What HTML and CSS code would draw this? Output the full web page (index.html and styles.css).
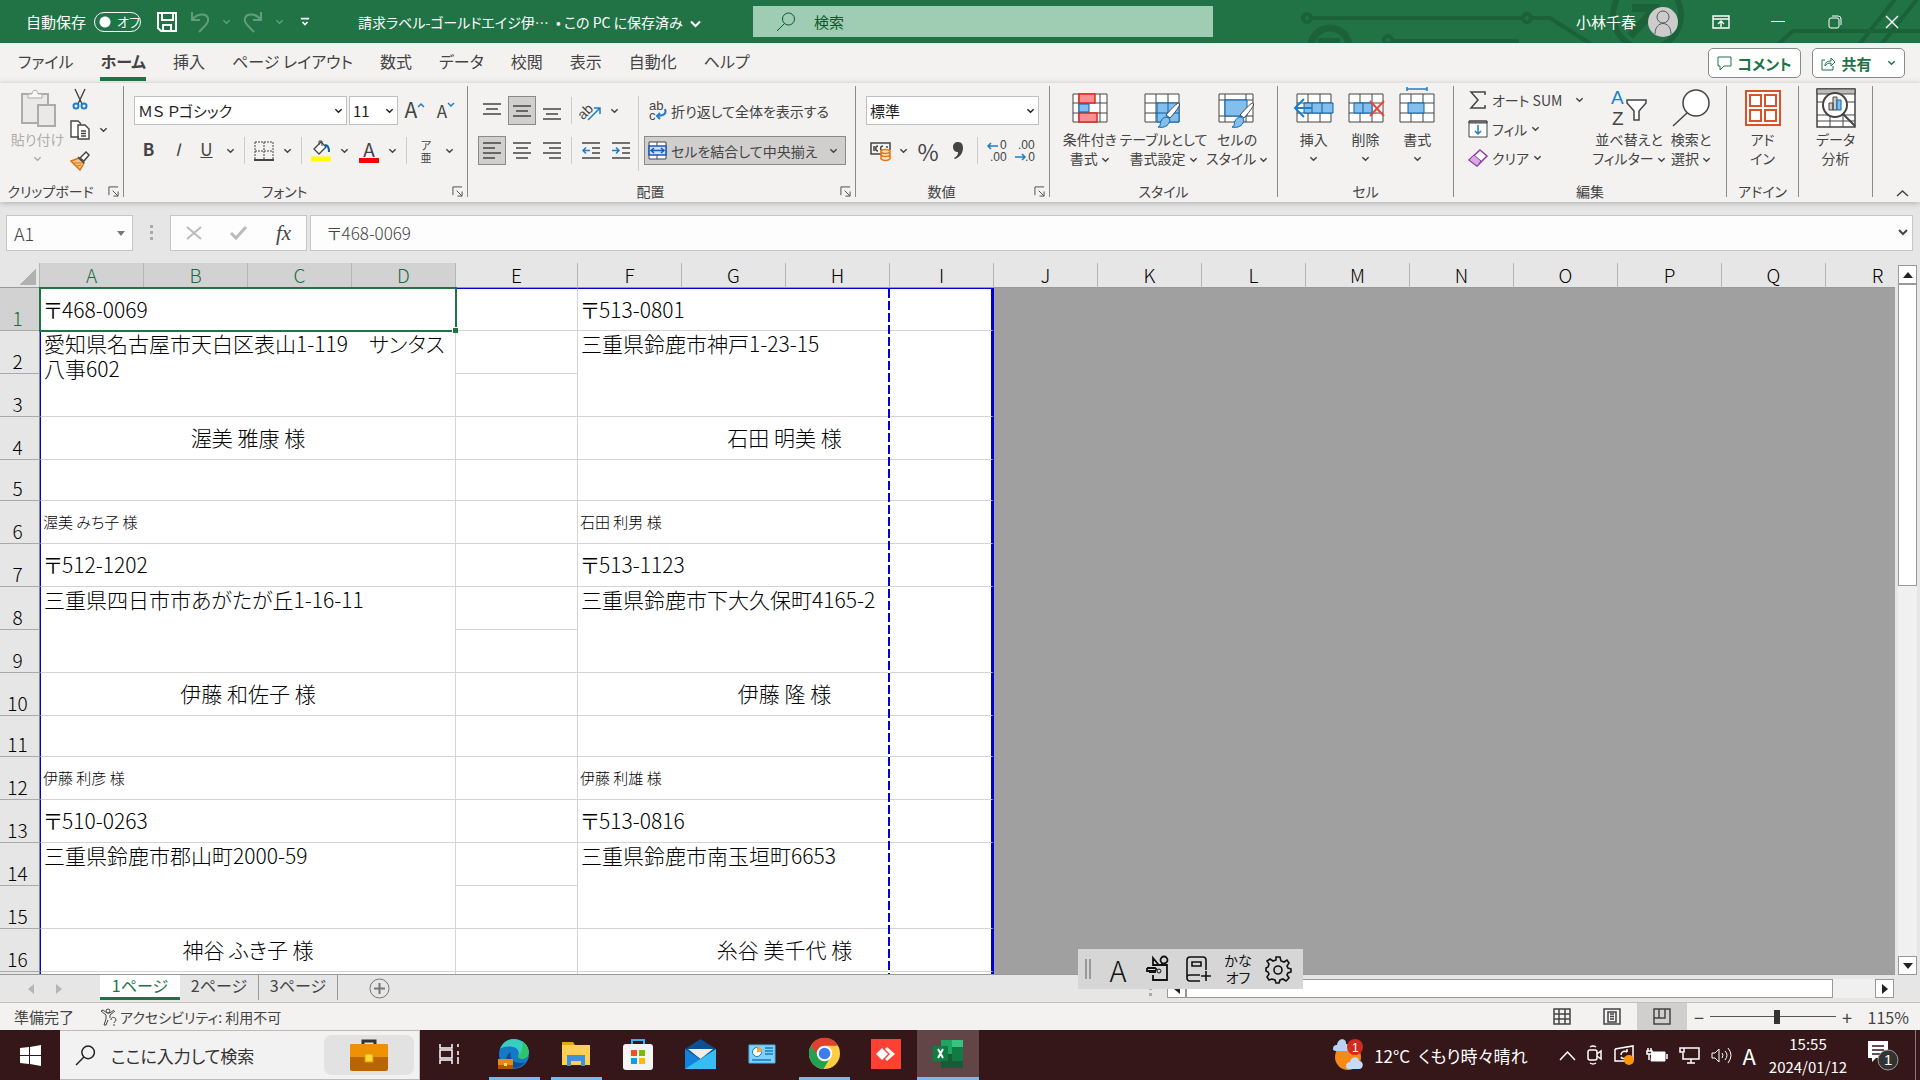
FILE: index.html
```html
<!DOCTYPE html>
<html lang="ja">
<head>
    <meta charset="UTF-8">
    <meta name="viewport" content="width=device-width, initial-scale=1.0">
    <title>請求ラベル - Excel</title>
    <link rel="stylesheet" href="styles.css">
</head>
<body>

    <!-- Shared icons -->
    <svg class="sprite" aria-hidden="true">
        <symbol id="chev" viewBox="0 0 10 6"><path stroke-width="1.600" d="M1.500 1 5 4.500 8.500 1"/></symbol>
        <symbol id="launch" viewBox="0 0 12 12"><path d="M1 10V1h10M5 5l5.500 5.500M11 6v5H6"/></symbol>
        <symbol id="lens" viewBox="0 0 20 20"><circle cx="12.500" cy="7" r="6"/><path d="M8.500 11.500 1 19"/></symbol>
        <symbol id="grid" viewBox="0 0 36 30"><path fill="#fff" d="M1 1h34v28H1z"/><path d="M1 10h34M1 20h34M12 1v28M24 1v28"/></symbol>
        <symbol id="paint" viewBox="0 0 24 28"><path fill="#fff" stroke="#444" d="M22 1c2 1-1 6-9 15l-4-3C16 5 20 1 22 1z"/><path fill="#83beec" stroke="#0063b1" d="M9 15c3 0 5 3 3 6-2 4-7 5-11 4 3-1 2-4 3-6s3-4 5-4z"/></symbol>
    </svg>

    <header class="titlebar">
        <svg class="circuit" viewBox="0 0 640 43" aria-hidden="true">
            <g fill="none" stroke="#1b6139" stroke-width="4">
                <circle cx="27" cy="18" r="4"/><path d="M32 18h211"/><circle cx="247" cy="18" r="4"/><path d="M252 18h18l44 28"/>
                <circle cx="50" cy="47" r="19" stroke-width="7"/><path d="M38 42h22" stroke-width="8"/>
                <circle cx="108" cy="40" r="4"/><path d="M113 41h126"/>
                <circle cx="367" cy="15" r="34" stroke-width="6"/><path d="M352 8h24v22M350 36l25-27" stroke-width="8"/>
                <path d="M496 46l17-15h127M578 46l38-48M600 46l38-48"/>
            </g>
        </svg>
        <label class="autosave">自動保存 <input type="checkbox"><span class="switch">オフ</span></label>
        <div class="quick">
            <button aria-label="保存"><svg width="22" height="22" viewBox="0 0 22 22"><path d="M2 2h18v18H5l-3-3zM6 2v7h11V2M7 20v-6h8v6" stroke-width="2"/></svg></button>
            <button class="dim" aria-label="元に戻す"><svg width="20" height="22" viewBox="0 0 20 22"><path d="M2 1v8h8M2 9c5-7 14-7 16-2 1 4-1 6-9 14" stroke-width="2"/></svg></button>
            <button class="dim" aria-label="元に戻す 一覧"><svg width="9" height="6"><use href="#chev"/></svg></button>
            <button class="dim" aria-label="やり直し"><svg width="20" height="22" viewBox="0 0 20 22"><path d="M18 1v8h-8M18 9C13 2 4 2 2 7c-1 4 1 6 9 14" stroke-width="2"/></svg></button>
            <button class="dim" aria-label="やり直し 一覧"><svg width="9" height="6"><use href="#chev"/></svg></button>
            <button aria-label="カスタマイズ"><svg width="10" height="10" viewBox="0 0 12 12"><path d="M1 2h10M3 6l3 3 3-3" stroke-width="2"/></svg></button>
        </div>
        <div class="doc">請求ラベル-ゴールドエイジ伊… <span>• この PC に保存済み</span> <svg width="13" height="8"><use href="#chev"/></svg></div>
        <div class="search"><svg width="20" height="22"><use href="#lens"/></svg><input type="search" placeholder="検索" aria-label="検索"></div>
        <div class="account">小林千春 <span class="avatar"><svg width="20" height="26" viewBox="0 0 20 26"><circle cx="10" cy="8" r="6"/><path d="M2 25c0-14 16-14 16 0"/></svg></span></div>
        <div class="winbtns">
            <button aria-label="リボンの表示オプション"><svg width="18" height="14" viewBox="0 0 18 14"><path d="M1 1h16v12H1zM1 4h16M9 12V6M6 9l3-3 3 3" stroke-width="1.400"/></svg></button>
            <button aria-label="最小化"><svg width="14" height="14" viewBox="0 0 14 14"><path d="M0 6.500h14"/></svg></button>
            <button aria-label="元のサイズ"><svg width="14" height="14" viewBox="0 0 14 14"><rect x="1" y="3" width="10" height="10" rx="2"/><path d="M4 1h6q3 0 3 3v6"/></svg></button>
            <button aria-label="閉じる"><svg width="14" height="14" viewBox="0 0 14 14"><path d="M1 1l12 12M13 1 1 13" stroke-width="1.400"/></svg></button>
        </div>
    </header>

    <nav class="tabs">
        <a href="#">ファイル</a>
        <a href="#" class="active">ホーム</a>
        <a href="#">挿入</a>
        <a href="#">ページ レイアウト</a>
        <a href="#">数式</a>
        <a href="#">データ</a>
        <a href="#">校閲</a>
        <a href="#">表示</a>
        <a href="#">自動化</a>
        <a href="#">ヘルプ</a>
        <div class="tabs-right">
            <button class="pill"><svg width="15" height="15" viewBox="0 0 15 15"><path d="M1 1h13v9H7l-4 4v-4H1z"/></svg>コメント</button>
            <button class="pill"><svg width="15" height="15" viewBox="0 0 15 15"><path d="M4 4H1v10h11v-4M4 10c0-4 3-5 6-5V2l4 4-4 4V7c-3 0-5 1-6 3z"/></svg>共有<svg class="gap-left" width="9" height="6"><use href="#chev"/></svg></button>
        </div>
    </nav>

    <section class="ribbon">
        <div class="group clip">
            <div class="body">
                <button class="big dim"><span class="pic"><svg width="36" height="38" viewBox="0 0 36 38"><path fill="#ddd" d="M2 5h26v11H18v18H2z" stroke-width="2"/><path fill="#fff" d="M8 9V5h4c0-5 6-5 6 0h4v4z"/><path fill="#ddd" stroke-width="2" d="M18 16h17v21H18z"/></svg></span>貼り付け<svg width="9" height="6"><use href="#chev"/></svg></button>
                <div class="stack">
                    <button class="mini" aria-label="切り取り"><svg width="16" height="22" viewBox="0 0 16 22"><path d="M3 1l7 15M13 1 6 16" stroke-width="1.400"/><g stroke="#1e7fc8" stroke-width="2"><circle cx="4" cy="18" r="2.500"/><circle cx="12" cy="18" r="2.500"/></g></svg></button>
                    <button class="mini wide" aria-label="コピー"><svg width="20" height="20" viewBox="0 0 20 20"><path fill="#fff" stroke-width="1.400" d="M9 17H1V1h7l3 3M8 5h7l4 4v10H8zM11 11h5M11 13.500h5M11 16h5"/></svg><svg width="9" height="6"><use href="#chev"/></svg></button>
                    <button class="mini" aria-label="書式のコピー"><svg width="20" height="20" viewBox="0 0 20 20"><path fill="#fff" stroke-width="1.500" d="M10 7l6-6 3 3-5 6z"/><path fill="#f8c48c" stroke="#d9730d" stroke-width="1.500" d="M1 10l8-3 5 5-4 7z"/><path d="M8 6l6 6" stroke-width="1.500"/><path stroke="#d9730d" d="M4 12l8 0M7 15l4-1"/></svg></button>
                </div>
            </div>
            <div class="caption more">クリップボード<button aria-label="クリップボードの設定"><svg width="11" height="11"><use href="#launch"/></svg></button></div>
        </div>

        <div class="group font">
            <div class="body rows">
                <div class="row">
                    <span class="combo name"><select aria-label="フォント"><option>ＭＳ Ｐゴシック</option></select><svg width="9" height="6"><use href="#chev"/></svg></span>
                    <span class="combo size"><select aria-label="フォント サイズ"><option>11</option></select><svg width="9" height="6"><use href="#chev"/></svg></span>
                    <button class="tool grow" aria-label="フォント サイズの拡大">A<svg width="8" height="6" viewBox="0 0 8 6"><path stroke="#1e7fc8" d="M1 5l3-3 3 3" stroke-width="1.500"/></svg></button>
                    <button class="tool shrink" aria-label="フォント サイズの縮小">A<svg width="8" height="6" viewBox="0 0 8 6"><path stroke="#1e7fc8" d="M1 1l3 3 3-3" stroke-width="1.500"/></svg></button>
                </div>
                <div class="row">
                    <button class="tool letter"><b>B</b></button>
                    <button class="tool letter"><i>I</i></button>
                    <button class="tool letter"><u>U</u></button>
                    <button class="drop" aria-label="下線"><svg width="9" height="6"><use href="#chev"/></svg></button>
                    <i class="sep"></i>
                    <button class="tool" aria-label="罫線"><svg width="20" height="20" viewBox="0 0 20 20"><path stroke-dasharray="2 1" d="M1 1h18v17M1 1v17M10 1v17M1 10h18"/><path d="M0 19h20" stroke-width="2"/></svg></button>
                    <button class="drop" aria-label="罫線の種類"><svg width="9" height="6"><use href="#chev"/></svg></button>
                    <i class="sep"></i>
                    <button class="tool" aria-label="塗りつぶしの色"><svg width="20" height="22" viewBox="0 0 20 22"><path fill="#fff" stroke-width="1.300" d="M3 9l7-7 5 5-7 7z"/><path d="M8 5V1h3v5"/><path stroke="#0063b1" stroke-width="2" d="M14 5c3 0 4 2 4 7"/><path stroke="#ff0" stroke-width="5" d="M0 19h20"/></svg></button>
                    <button class="drop" aria-label="塗りつぶしの色 一覧"><svg width="9" height="6"><use href="#chev"/></svg></button>
                    <button class="tool fontcolor" aria-label="フォントの色">A</button>
                    <button class="drop" aria-label="フォントの色 一覧"><svg width="9" height="6"><use href="#chev"/></svg></button>
                    <i class="sep"></i>
                    <button class="tool ruby" aria-label="ふりがな">ア<br>亜</button>
                    <button class="drop" aria-label="ふりがな 一覧"><svg width="9" height="6"><use href="#chev"/></svg></button>
                </div>
            </div>
            <div class="caption more">フォント<button aria-label="フォントの設定"><svg width="11" height="11"><use href="#launch"/></svg></button></div>
        </div>

        <div class="group align">
            <div class="body">
                <div class="rows">
                    <div class="row spaced">
                        <button class="tool" aria-label="上揃え"><svg width="18" height="20" viewBox="0 0 18 20"><path d="M0 3h18M3 8h12M0 13h18" stroke-width="1.500"/></svg></button>
                        <button class="tool on" aria-label="上下中央揃え"><svg width="18" height="20" viewBox="0 0 18 20"><path d="M0 5h18M3 10h12M0 15h18" stroke-width="1.500"/></svg></button>
                        <button class="tool" aria-label="下揃え"><svg width="18" height="20" viewBox="0 0 18 20"><path d="M0 8h18M3 13h12M0 18h18" stroke-width="1.500"/></svg></button>
                        <i class="sep"></i>
                        <button class="tool" aria-label="方向"><svg width="22" height="22" viewBox="0 0 22 22"><text x="-3" y="14" transform="rotate(-45 8 10)" font-size="14">ab</text><path stroke="#1e7fc8" stroke-width="1.500" d="M8 20 20 8M14 8h6v6"/></svg></button>
                        <button class="drop" aria-label="方向 一覧"><svg width="9" height="6"><use href="#chev"/></svg></button>
                    </div>
                    <div class="row spaced">
                        <button class="tool on" aria-label="左揃え"><svg width="18" height="20" viewBox="0 0 18 20"><path d="M0 2h18M0 7h12M0 12h18M0 17h12" stroke-width="1.500"/></svg></button>
                        <button class="tool" aria-label="中央揃え"><svg width="18" height="20" viewBox="0 0 18 20"><path d="M0 2h18M3 7h12M0 12h18M3 17h12" stroke-width="1.500"/></svg></button>
                        <button class="tool" aria-label="右揃え"><svg width="18" height="20" viewBox="0 0 18 20"><path d="M0 2h18M6 7h12M0 12h18M6 17h12" stroke-width="1.500"/></svg></button>
                        <i class="sep"></i>
                        <button class="tool" aria-label="インデントを減らす"><svg width="18" height="20" viewBox="0 0 18 20"><path d="M0 2h18M10 7h8M10 12h8M0 17h18" stroke-width="1.500"/><path stroke="#1e7fc8" stroke-width="1.500" d="M8 9.500H1M4 6.500l-3 3 3 3"/></svg></button>
                        <button class="tool" aria-label="インデントを増やす"><svg width="18" height="20" viewBox="0 0 18 20"><path d="M0 2h18M10 7h8M10 12h8M0 17h18" stroke-width="1.500"/><path stroke="#1e7fc8" stroke-width="1.500" d="M0 9.500h7M4 6.500l3 3-3 3"/></svg></button>
                    </div>
                </div>
                <i class="sep tall"></i>
                <div class="rows">
                    <button class="textbtn"><svg width="18" height="20" viewBox="0 0 18 20"><text x="0" y="9" font-size="13">ab</text><text x="0" y="19" font-size="13">c</text><path stroke="#1e7fc8" stroke-width="2" d="M16 8c2 5-2 7-8 7M11 12l-3 3 3 3"/></svg>折り返して全体を表示する</button>
                    <button class="textbtn on"><svg width="19" height="21" viewBox="0 0 19 19"><path fill="#fff" d="M1 1h17v17H1zM9 1v17"/><path fill="#cde3f5" stroke="#185abd" stroke-width="1.500" d="M1 5h17v9H1z"/><path stroke="#185abd" stroke-width="1.500" d="M3 9.500h13M6 7 3 9.500 6 12M13 7l3 2.500-3 2.500"/></svg>セルを結合して中央揃え<svg class="end" width="9" height="6"><use href="#chev"/></svg></button>
                </div>
            </div>
            <div class="caption more">配置<button aria-label="配置の設定"><svg width="11" height="11"><use href="#launch"/></svg></button></div>
        </div>

        <div class="group number">
            <div class="body rows">
                <span class="combo"><select aria-label="数値の書式"><option>標準</option></select><svg width="9" height="6"><use href="#chev"/></svg></span>
                <div class="row">
                    <button class="tool" aria-label="通貨"><svg width="21" height="20" viewBox="0 0 21 20"><path d="M20 9V2H1v11h10M8 5c-3 0-3 5 0 5M13 5c-3 0-3 4-1 5M4 5v5M17 5v2" stroke-width="1.500"/><path fill="#fde3c8" stroke="#e8740c" stroke-width="1.500" d="M11 10v8c2 2 7 2 9 0v-8c-2-2-7-2-9 0zM11 11c2 2 7 2 9 0M11 14c2 2 7 2 9 0"/></svg></button>
                    <button class="drop" aria-label="通貨 一覧"><svg width="9" height="6"><use href="#chev"/></svg></button>
                    <button class="tool percent">%</button>
                    <button class="tool" aria-label="桁区切り"><svg width="12" height="18" viewBox="0 0 12 18"><path fill="#444" stroke="none" d="M6 0c4 0 5 3 5 6 0 5-3 9-8 11l-1-1c3-2 4-3 4-6-3 0-5-2-5-5s2-5 5-5z"/></svg></button>
                    <i class="sep"></i>
                    <button class="tool" aria-label="小数点以下の表示桁数を増やす"><svg width="20" height="22" viewBox="0 0 20 22"><text x="13" y="9" font-size="12">0</text><text x="3" y="21" font-size="12">.00</text><path stroke="#1e7fc8" stroke-width="1.500" d="M11 6H1M4 3 1 6l3 3"/></svg></button>
                    <button class="tool" aria-label="小数点以下の表示桁数を減らす"><svg width="20" height="22" viewBox="0 0 20 22"><text x="3" y="9" font-size="12">.00</text><text x="10" y="21" font-size="12">.0</text><path stroke="#1e7fc8" stroke-width="1.500" d="M0 17h10M7 14l3 3-3 3"/></svg></button>
                </div>
            </div>
            <div class="caption more">数値<button aria-label="数値の設定"><svg width="11" height="11"><use href="#launch"/></svg></button></div>
        </div>

        <div class="group styles">
            <div class="body">
                <button class="big"><span class="pic"><svg width="36" height="30" viewBox="0 0 36 30"><path fill="#fff" d="M1 1h34v28H1zM1 10h34M1 20h34M7 1v28M28 1v28"/><path fill="#ff8f94" stroke="#d92b1c" stroke-width="1.500" d="M7 1h16v9H7zM7 20h18v9H7z"/><path fill="#83beec" stroke="#0063b1" d="M7 11h10v8H7z"/></svg></span>条件付き<span>書式 <svg width="9" height="6"><use href="#chev"/></svg></span></button>
                <button class="big"><span class="pic"><svg width="39" height="30" viewBox="0 0 39 30"><use href="#grid" width="36" height="30"/><path fill="#83beec" stroke="#0063b1" d="M13 10h22v19H13zM24 10v19M13 20h22"/><use href="#paint" x="11" y="9" width="28" height="28"/></svg></span>テーブルとして<span>書式設定 <svg width="9" height="6"><use href="#chev"/></svg></span></button>
                <button class="big"><span class="pic"><svg width="39" height="30" viewBox="0 0 39 30"><path fill="#fff" d="M1 1h34v28H1zM1 7h34M1 23h34M7 1v28M28 1v28"/><path fill="#83beec" stroke="#0063b1" d="M7 7h22v16H7z"/><use href="#paint" x="11" y="9" width="28" height="28"/></svg></span>セルの<span>スタイル <svg width="9" height="6"><use href="#chev"/></svg></span></button>
            </div>
            <div class="caption">スタイル</div>
        </div>

        <div class="group cells">
            <div class="body">
                <button class="big"><span class="pic"><svg width="40" height="30" viewBox="0 0 40 30"><use href="#grid" x="2" width="36" height="30"/><path fill="#83beec" stroke="#0063b1" d="M10 10h29v10H10zM18 10v10M28 10v10"/><path stroke="#1e7fc8" stroke-width="2" d="M18 15H2M10 6l-9 9 9 9"/></svg></span>挿入<svg width="9" height="6"><use href="#chev"/></svg></button>
                <button class="big"><span class="pic"><svg width="40" height="30" viewBox="0 0 40 30"><use href="#grid" x="2" width="36" height="30"/><path fill="#83beec" stroke="#0063b1" d="M8 10h18v10H8zM17 10v10"/><path stroke="#e8453c" stroke-width="2" d="M24 8l14 15M38 8 24 23"/></svg></span>削除<svg width="9" height="6"><use href="#chev"/></svg></button>
                <button class="big"><span class="pic up"><svg width="36" height="36" viewBox="0 0 36 36"><use href="#grid" y="6" width="36" height="30"/><path fill="#83beec" stroke="#0063b1" d="M9 16h16v10H9z"/><path stroke="#1e7fc8" stroke-width="1.500" d="M8 2h20M8 0v4M28 0v4"/></svg></span>書式<svg width="9" height="6"><use href="#chev"/></svg></button>
            </div>
            <div class="caption">セル</div>
        </div>

        <div class="group edit">
            <div class="body">
                <div class="list">
                    <button><svg width="20" height="18" viewBox="0 0 20 18"><path d="M17 4V1H3l7 8-7 8h14v-3" stroke-width="1.500"/></svg>オート SUM<svg class="far" width="9" height="6"><use href="#chev"/></svg></button>
                    <button><svg width="20" height="18" viewBox="0 0 20 18"><path fill="#fff" d="M1 1h18v16H1z"/><path fill="#888" d="M1 1h18v2H1z"/><path stroke="#1e7fc8" stroke-width="1.500" d="M10 5v9M7 11l3 3 3-3"/></svg>フィル<svg width="9" height="6"><use href="#chev"/></svg></button>
                    <button><svg width="20" height="18" viewBox="0 0 20 18"><path fill="#fff" stroke="#8d3aa8" stroke-width="1.500" d="M12 1l7 6-10 10-8-6z"/><path fill="#d9a8e3" stroke="#8d3aa8" d="M6 6l7 6-4 5-8-6z"/></svg>クリア<svg width="9" height="6"><use href="#chev"/></svg></button>
                </div>
                <button class="big sort"><span class="pic"><svg width="36" height="40" viewBox="0 0 36 40"><text class="blue" x="0" y="16" font-size="19">A</text><text x="1" y="37" font-size="19">Z</text><path fill="#fff" stroke-width="1.500" d="M16 12h19v3l-7 8v9h-5v-9l-7-8z"/></svg></span>並べ替えと<span>フィルター <svg width="9" height="6"><use href="#chev"/></svg></span></button>
                <button class="big find"><span class="pic"><svg width="38" height="38" viewBox="0 0 38 38"><circle cx="24" cy="14" r="13" fill="#fff" stroke-width="1.500"/><path d="M15 24 1 37" stroke-width="1.500"/></svg></span>検索と<span>選択 <svg width="9" height="6"><use href="#chev"/></svg></span></button>
            </div>
            <div class="caption">編集</div>
        </div>

        <div class="group addin">
            <div class="body">
                <button class="big"><span class="pic"><svg width="36" height="36" viewBox="0 0 36 36"><path fill="#fff" stroke="#dd5128" stroke-width="2" d="M1 1h34v34H1zM5 5h11v11H5zM20 5h11v11H20zM5 20h11v11H5zM20 20h11v11H20z"/></svg></span>アド<span>イン</span></button>
            </div>
            <div class="caption">アドイン</div>
        </div>

        <div class="group data">
            <div class="body">
                <button class="big"><span class="pic"><svg width="40" height="40" viewBox="0 0 40 40"><path fill="#fff" stroke-width="1.500" d="M1 1h38v38H1z"/><path d="M1 14h38M1 27h38M14 27v12M27 27v12M1 33h38"/><path fill="#bbb" d="M1 1h38v5H1z"/><circle cx="19" cy="17" r="12" fill="#fff" stroke-width="2"/><path stroke-width="2" d="M27 26l12 12"/><path fill="#ccc" d="M13 15h4v7h-4zM17 9h4v13h-4z"/><path fill="#83beec" stroke="#0063b1" d="M21 12h4v10h-4z"/></svg></span>データ<span>分析</span></button>
            </div>
        </div>
        <button class="collapse" aria-label="リボンを折りたたむ"><svg width="13" height="9" viewBox="0 0 13 9"><path d="M1 7l5.500-5L12 7" stroke-width="1.500"/></svg></button>
    </section>

    <section class="formulabar">
        <span class="namebox"><input type="text" value="A1" aria-label="名前ボックス"><svg width="8" height="5" viewBox="0 0 8 5"><path fill="#777" stroke="none" d="M0 0h8L4 5z"/></svg></span>
        <i class="dots"></i>
        <div class="fx">
            <button aria-label="キャンセル"><svg width="16" height="14" viewBox="0 0 16 14"><path stroke="#bbb" stroke-width="2" d="M1 1l14 12M15 1 1 13"/></svg></button>
            <button aria-label="入力"><svg width="17" height="14" viewBox="0 0 17 14"><path stroke="#bbb" stroke-width="3" d="M1 7l5 5L16 1"/></svg></button>
            <button class="fn">fx</button>
        </div>
        <div class="formula"><input type="text" value="〒468-0069" aria-label="数式バー"><svg width="10" height="7" viewBox="0 0 10 7"><path d="M1 1l4 4 4-4" stroke-width="2"/></svg></div>
    </section>

    <main class="workspace">
        <div class="sheet">
            <table>
                <colgroup><col class="c-num"><col span="4"><col class="c-e"><col span="13"></colgroup>
                <thead>
                    <tr><th class="corner"></th><th class="sel">A</th><th class="sel">B</th><th class="sel">C</th><th class="sel">D</th><th>E</th><th>F</th><th>G</th><th>H</th><th>I</th><th>J</th><th>K</th><th>L</th><th>M</th><th>N</th><th>O</th><th>P</th><th>Q</th><th>R</th></tr>
                </thead>
                <tbody>
                    <tr><th class="sel">1</th><td colspan="4" class="zip current">〒468-0069<i class="handle"></i></td><td></td><td colspan="4" class="zip edge">〒513-0801</td><td colspan="9" rowspan="17" class="outside"></td></tr>
                    <tr><th>2</th><td colspan="4" rowspan="2" class="addr">愛知県名古屋市天白区表山1-119　サンタス<br>八事602</td><td></td><td colspan="4" rowspan="2" class="addr edge">三重県鈴鹿市神戸1-23-15</td></tr>
                    <tr><th>3</th><td></td></tr>
                    <tr><th>4</th><td colspan="4" class="who">渥美 雅康 様</td><td></td><td colspan="4" class="who edge">石田 明美 様</td></tr>
                    <tr class="short"><th>5</th><td colspan="4"></td><td></td><td colspan="4" class="edge"></td></tr>
                    <tr><th>6</th><td colspan="4" class="small">渥美 みち子 様</td><td></td><td colspan="4" class="small edge">石田 利男 様</td></tr>
                    <tr><th>7</th><td colspan="4" class="zip">〒512-1202</td><td></td><td colspan="4" class="zip edge">〒513-1123</td></tr>
                    <tr><th>8</th><td colspan="4" rowspan="2" class="addr">三重県四日市市あがたが丘1-16-11</td><td></td><td colspan="4" rowspan="2" class="addr edge">三重県鈴鹿市下大久保町4165-2</td></tr>
                    <tr><th>9</th><td></td></tr>
                    <tr><th>10</th><td colspan="4" class="who">伊藤 和佐子 様</td><td></td><td colspan="4" class="who edge">伊藤 隆 様</td></tr>
                    <tr class="short"><th>11</th><td colspan="4"></td><td></td><td colspan="4" class="edge"></td></tr>
                    <tr><th>12</th><td colspan="4" class="small">伊藤 利彦 様</td><td></td><td colspan="4" class="small edge">伊藤 利雄 様</td></tr>
                    <tr><th>13</th><td colspan="4" class="zip">〒510-0263</td><td></td><td colspan="4" class="zip edge">〒513-0816</td></tr>
                    <tr><th>14</th><td colspan="4" rowspan="2" class="addr">三重県鈴鹿市郡山町2000-59</td><td></td><td colspan="4" rowspan="2" class="addr edge">三重県鈴鹿市南玉垣町6653</td></tr>
                    <tr><th>15</th><td></td></tr>
                    <tr><th>16</th><td colspan="4" class="who">神谷 ふき子 様</td><td></td><td colspan="4" class="who edge">糸谷 美千代 様</td></tr>
                    <tr><th></th><td colspan="4"></td><td></td><td colspan="4" class="edge"></td></tr>
                </tbody>
            </table>
            <div class="pagebreak"></div>
        </div>
        <div class="vscroll">
            <button aria-label="上へ"><svg width="10" height="6" viewBox="0 0 10 6"><path d="M0 6h10L5 0z"/></svg></button>
            <div class="thumb"></div>
            <button aria-label="下へ"><svg width="10" height="6" viewBox="0 0 10 6"><path d="M0 0h10L5 6z"/></svg></button>
        </div>
    </main>

    <section class="sheetbar">
        <div class="arrows"><svg width="6" height="10" viewBox="0 0 6 10"><path d="M6 0v10L0 5z"/></svg><svg width="6" height="10" viewBox="0 0 6 10"><path d="M0 0v10l6-5z"/></svg></div>
        <button class="tab active">1ページ</button>
        <button class="tab">2ページ</button>
        <button class="tab">3ページ</button>
        <button class="plus" aria-label="新しいシート"><svg width="21" height="21" viewBox="0 0 21 21"><circle cx="10.500" cy="10.500" r="9.500"/><path d="M10.500 5v11M5 10.500h11" stroke-width="2"/></svg></button>
        <div class="hscroll">
            <i class="dots"></i>
            <button aria-label="左へ"><svg width="6" height="10" viewBox="0 0 6 10"><path d="M6 0v10L0 5z"/></svg></button>
            <div class="thumb"></div>
            <div class="track"></div>
            <button aria-label="右へ"><svg width="6" height="10" viewBox="0 0 6 10"><path d="M0 0v10l6-5z"/></svg></button>
        </div>
        <!-- IME toolbar floating over the sheet -->
        <div class="ime">
            <i class="grip"></i>
            <button class="mode">A</button>
            <button aria-label="IME パッド"><svg width="24" height="26" viewBox="0 0 24 26"><path d="M7 10V2l5 6v2M16 9V7M7 9h14v15H7v-5M1 12h8l2 2M1 12v3h9M3 16h7" stroke-width="1.800"/><circle cx="18" cy="4" r="3.500" stroke-width="1.800"/><circle cx="13" cy="15" r="2"/></svg></button>
            <button aria-label="単語の登録"><svg width="25" height="26" viewBox="0 0 25 26"><path d="M20 14V4q0-3-3-3H4Q1 1 1 4v18q0 3 3 3h10M1 21q0-2 3-2h10M20 15v10M15 20h10M6 6h9v4H6z" stroke-width="1.600"/></svg></button>
            <button class="kana">かな<br>オフ</button>
            <button aria-label="設定"><svg width="26" height="26" viewBox="0 0 26 26"><path d="M11 1h4l1 4 3 1 3-2 2 3-2 3 1 2 3 1v3l-3 1-1 2 2 3-3 3-3-2-3 1-1 3h-3l-1-3-3-1-3 1-2-3 2-3-1-2-2-1v-3l2-1 1-3-2-3 3-2 3 2 3-1z" stroke-width="1.600"/><circle cx="13" cy="14" r="4" stroke-width="1.600"/></svg></button>
        </div>
    </section>

    <footer class="statusbar">
        <span>準備完了</span>
        <span class="access"><svg width="18" height="18" viewBox="0 0 18 18"><circle cx="8" cy="3" r="2"/><path d="M1 3l5 4v4l-2 6M15 3l-5 4v3M1 3l2-1 4 3h3l4-3M4 17h2l2-5M11 12c0-4 5-3 5 0 0 2-2 1-2 3M14 16v2"/></svg>アクセシビリティ: 利用不可</span>
        <div class="views">
            <button aria-label="標準"><svg width="18" height="17" viewBox="0 0 18 17"><path d="M1 1h16v15H1zM1 6h16M1 11h16M6 1v15M12 1v15" stroke-width="1.500"/></svg></button>
            <button aria-label="ページ レイアウト"><svg width="18" height="17" viewBox="0 0 18 17"><path d="M1 1h16v15H1zM5 4h8v10H5zM7 6h4M7 8.500h4M7 11h4" stroke-width="1.500"/></svg></button>
            <button class="on" aria-label="改ページ プレビュー"><svg width="18" height="17" viewBox="0 0 18 17"><path d="M1 1h16v15H1zM1 10h11V1M6 1v9" stroke-width="1.500"/></svg></button>
        </div>
        <div class="zoom"><button>−</button><input type="range" min="0" max="100" value="53" aria-label="ズーム"><button>+</button><span>115%</span></div>
    </footer>

    <footer class="taskbar">
        <button class="start" aria-label="スタート"><svg width="21" height="21" viewBox="0 0 21 21"><path fill="#fff" stroke="none" d="M0 3l9-1v8H0zM10 2l11-2v10H10zM0 11h9v8l-9-1zM10 11h11v10l-11-2z"/></svg></button>
        <div class="tasksearch">
            <svg width="21" height="21"><use href="#lens" stroke-width="1.400"/></svg>
            <input type="search" placeholder="ここに入力して検索" aria-label="ここに入力して検索">
            <span class="case"><svg width="38" height="32" viewBox="0 0 38 32"><path stroke="#333" stroke-width="3" d="M13 6V2h12v4"/><rect y="5" width="38" height="27" rx="2" fill="#b96504" stroke="none"/><path fill="#ef9104" stroke="none" d="M0 7q0-2 2-2h34q2 0 2 2v11H0z"/><path fill="#ffd733" stroke="#d99b00" d="M15 15h8v8h-8z"/></svg></span>
        </div>
        <div class="apps">
            <button aria-label="タスク ビュー"><svg width="22" height="20" viewBox="0 0 22 20"><path stroke="#fff" stroke-width="1.500" d="M1 0v4h12V0M1 20v-4h12v4M1 6h12v8H1zM19 0v3M19 7v4M19 13v7"/></svg></button>
            <button class="open" aria-label="Edge"><svg width="32" height="32" viewBox="0 0 32 32"><g stroke="none"><circle cx="16" cy="16" r="15" fill="#147ac6"/><path fill="#38cfc0" d="M2 11C5 3 13-1 21 2c9 3 12 12 8 17-3 3-9 2-9-1 2-2 1-8-5-9C9 8 4 9 2 11z"/><path fill="#2fc36b" d="M24 3c7 4 8 12 5 16-3 3-9 2-9-1 3-3 6-8 4-15z"/><path fill="#0c4e94" d="M13 14c-2 8 5 13 14 10-4 6-12 8-17 3-4-5-1-11 3-13z"/><rect y="21" width="15" height="10" fill="#e58a1a"/><path fill="#a95a06" d="M0 27h15v4H0z"/><path fill="#ffe066" d="M6 25h3v3H6z"/></g></svg></button>
            <button class="open" aria-label="エクスプローラー"><svg width="28" height="24" viewBox="0 0 28 24"><g stroke="none"><path fill="#e4a416" d="M0 0h11l2 3h-13z"/><path fill="#fdd054" d="M0 3h28v20H0z"/><path fill="#3d93d8" d="M5 13h18v11h-4v-5H9v5H5z"/></g></svg></button>
            <button aria-label="Store"><svg width="30" height="32" viewBox="0 0 30 32"><path stroke="#33b3f2" stroke-width="2" d="M9 7V2h12v5"/><rect y="6" width="30" height="26" rx="3" fill="#f5f5f5" stroke="none"/><g stroke="none"><path fill="#f05022" d="M8 12h6v6H8z"/><path fill="#7fba00" d="M16 12h6v6h-6z"/><path fill="#00a4ef" d="M8 20h6v6H8z"/><path fill="#ffb900" d="M16 20h6v6h-6z"/></g></svg></button>
            <button aria-label="メール"><svg width="31" height="30" viewBox="0 0 31 30"><g stroke="none"><path fill="#0b4f94" d="M0 10 15.500 0 31 10v8H0z"/><path fill="#eee" d="M3 10h25L15.500 20z"/><path fill="#1183dc" d="M0 10l15 10L31 30H0z"/><path fill="#35bdf4" d="M31 10 0 30h31z"/></g></svg></button>
            <button aria-label="コントロール パネル"><svg width="28" height="20" viewBox="0 0 28 20"><path fill="#7fd0fb" stroke="#49b4ee" d="M1 1h26v18H1z"/><circle cx="9" cy="8" r="4.500" fill="#fff" stroke="#1579c4"/><path fill="#f7a528" stroke="none" d="M9 8V3a5 5 0 0 1 5 5z"/><path stroke="#1579c4" d="M17 4h8M17 7h8M17 10h8M4 16h19" stroke-width="1.500"/></svg></button>
            <button class="open" aria-label="Chrome"><svg width="31" height="31" viewBox="0 0 32 32"><g stroke="none"><circle cx="16" cy="16" r="16" fill="#ffcd42"/><path fill="#e0402f" d="M2 8a16 16 0 0 1 28 0H16l-7 12z"/><path fill="#23a050" d="M2 8a16 16 0 0 0 13 24l7-12-11 1z"/><circle cx="16" cy="16" r="8" fill="#fff"/><circle cx="16" cy="16" r="6" fill="#3b7ded"/></g></svg></button>
            <button aria-label="AnyDesk"><svg width="30" height="30" viewBox="0 0 30 30"><g stroke="none"><path fill="#ff4134" d="M0 0h30v30H0z"/><path fill="#fff" d="M5 15l6-6 6 6-6 6zM14 10l2-2 8 7-8 7-2-2 5-5z"/></g></svg></button>
            <button class="open current-app" aria-label="Excel"><svg width="30" height="28" viewBox="0 0 30 28"><g stroke="none"><path fill="#21a366" d="M8 0h22v14H8z"/><path fill="#33c481" d="M19 0h11v7H19z"/><path fill="#185c37" d="M8 14h22v14H8z"/><path fill="#107c41" d="M19 7h11v14H19zM0 6h15v15H0z"/></g><path stroke="#fff" stroke-width="2" d="M5 9l5 9M10 9l-5 9"/></svg></button>
        </div>
        <div class="tray">
            <button class="weather"><svg width="30" height="34" viewBox="0 0 30 34"><g stroke="none"><circle cx="15" cy="19" r="13" fill="#f58b16"/><path fill="#b9d2f4" d="M0 11c0-4 3-4 4-4C5-1 14 0 13 6c4 0 4 7 0 7H3c-2 0-3-1-3-2z"/><path fill="#c5dbf8" d="M13 28c0-3 2-4 4-4 1-6 9-6 9-1 5 0 5 8 0 8H16c-2 0-3-1-3-3z"/><circle cx="22" cy="9" r="8" fill="#cf2b20"/></g><text class="white" x="19" y="14" font-size="12">1</text></svg>12°C&ensp;くもり時々晴れ</button>
            <div class="trayicons">
                <button aria-label="隠れているインジケーター"><svg width="17" height="11" viewBox="0 0 17 11"><path d="M1 10l7.500-8L16 10" stroke-width="1.500"/></svg></button>
                <button aria-label="会議"><svg width="16" height="20" viewBox="0 0 16 20"><rect x="1" y="5" width="9" height="10" rx="2" stroke-width="1.500"/><path d="M10 9l4-3v8l-4-3M3 2q3-2 6 0M3 18q3 2 6 0" stroke-width="1.500"/></svg></button>
                <button aria-label="更新"><svg width="21" height="20" viewBox="0 0 21 20"><path d="M1 4l18-3v14M1 4v12h10M13 7c-4-2-6 1-6 3M13 7V4M7 12c2 3 5 1 6-1" stroke-width="1.500"/><circle cx="15" cy="15" r="5" fill="#ff9800" stroke="none"/></svg></button>
                <button aria-label="バッテリー"><svg width="22" height="16" viewBox="0 0 22 16"><path fill="#fff" d="M6 5h13v9H5z"/><path d="M21 7v5M2 1v3M5 1v3M1 4h5v3H1zM3 7v6" stroke-width="1.500"/></svg></button>
                <button aria-label="ネットワーク"><svg width="21" height="17" viewBox="0 0 21 17"><path d="M5 1h15v11H4V6M12 12v4M8 16h8M1 1h4v4H1z" stroke-width="1.500"/></svg></button>
                <button aria-label="音量"><svg width="21" height="17" viewBox="0 0 21 17"><path d="M1 6h3l4-4v13l-4-4H1zM11 6q2 2 0 5M14 4q4 4 0 9M17 1q6 7 0 15"/></svg></button>
                <button class="mode">A</button>
            </div>
            <div class="clock">15:55<br>2024/01/12</div>
            <button class="notice" aria-label="通知"><svg width="32" height="32" viewBox="0 0 32 32"><path fill="#fff" stroke="none" d="M0 2h20v17H8l-4 4v-4H0z"/><path stroke="#35161a" stroke-width="1.500" d="M4 7h12M4 11h12M4 15h8"/><circle cx="20" cy="21" r="10" fill="#333" stroke="#999"/><text class="white" x="16" y="26" font-size="15">1</text></svg></button>
        </div>
    </footer>

</body>
</html>
```
FILE: styles.css
```css
* { box-sizing: border-box; }
body {
    margin: 0;
    height: 100vh;
    display: flex;
    flex-direction: column;
    overflow: hidden;
    background: #e6e6e6;
    color: #444;
    font-family: "Noto Sans CJK JP", sans-serif;
    font-feature-settings: "palt";
    font-size: 15px;
    font-weight: 300;
    white-space: nowrap;
}
button, input, select { font: inherit; font-feature-settings: inherit; color: inherit; }
button {
    display: flex;
    align-items: center;
    justify-content: center;
    padding: 0;
    border: none;
    background: none;
    cursor: pointer;
}
input, select { border: none; background: none; padding: 0; min-width: 0; outline: none; }
svg { fill: none; stroke: currentColor; flex: none; overflow: visible; }
svg text { font-family: "Liberation Sans", sans-serif; font-weight: 400; fill: #444; stroke: none; }
svg text.blue { fill: #1e7fc8; }
svg text.white { fill: #fff; }
a { color: inherit; text-decoration: none; }
.sprite { display: none; }

/* Title bar */
.titlebar {
    position: relative;
    display: flex;
    align-items: center;
    height: 43px;
    padding-left: 26px;
    background: #217346;
    color: #fff;
    font-weight: 400;
    flex: none;
}
.titlebar > * { position: relative; }
.titlebar .circuit { position: absolute; right: 0; top: 0; width: 640px; height: 43px; overflow: hidden; }
.autosave { display: flex; align-items: center; gap: 8px; width: 125px; line-height: 20px; }
.autosave input { position: absolute; opacity: 0; }
.switch {
    width: 47px;
    height: 20px;
    border: 1px solid #fff;
    border-radius: 10px;
    padding-left: 22px;
    font-size: 13px;
    line-height: 18px;
    background: radial-gradient(circle at 10px 9px, #fff 5px, transparent 6px);
}
.quick { display: flex; align-items: center; width: 207px; gap: 12px; padding-left: 5px; }
.quick button:last-child { margin-left: 4px; }
.dim { opacity: 0.4; }
.quick .dim { opacity: 0.3; }
.doc { width: 395px; font-size: 14px; }
.doc span { margin-left: 4px; }
.doc svg { margin-left: 3px; }
.search {
    display: flex;
    align-items: center;
    gap: 18px;
    width: 460px;
    height: 31px;
    padding-left: 23px;
    background: #9fcdb3;
    color: #0b5a2c;
}
.search input { flex: 1; }
.search input::placeholder { color: #0b5a2c; opacity: 1; }
.account { display: flex; align-items: center; gap: 12px; margin-left: auto; }
.avatar { width: 30px; height: 30px; border-radius: 50%; background: #ccc; color: #555; display: flex; justify-content: center; align-items: center; }
.winbtns { display: flex; padding-left: 14px; }
.winbtns button { width: 57px; height: 43px; }

/* Ribbon tabs */
.tabs {
    display: flex;
    align-items: center;
    height: 40px;
    padding: 0 15px 0 18px;
    gap: 27px;
    background: #f3f2f1;
    font-size: 16px;
    flex: none;
}
.tabs a { line-height: 33px; height: 36px; font-weight: 400; }
.tabs a.active { font-weight: 700; border-bottom: 4px solid #217346; }
.tabs-right { display: flex; gap: 11px; margin-left: auto; font-size: 15px; }
.pill {
    width: 93px;
    height: 30px;
    gap: 5px;
    border: 1px solid #8a8a8a;
    border-radius: 5px;
    background: #fff;
    color: #217346;
    font-weight: 700;
}
.gap-left { margin-left: 10px; }

/* Ribbon */
.ribbon {
    position: relative;
    z-index: 1;
    display: flex;
    height: 119px;
    padding-top: 3px;
    background: #f3f2f1;
    box-shadow: 0 1px 6px rgba(0, 0, 0, 0.25);
    font-size: 14px;
    font-weight: 400;
    flex: none;
}
.group { height: 111px; border-right: 1px solid #8a8a8a; display: flex; flex-direction: column; }
.body { display: flex; height: 99px; }
.caption { position: relative; text-align: center; line-height: 12px; height: 12px; }
.caption.more { padding-right: 22px; }
.caption button { position: absolute; right: 4px; top: 1px; }
.clip { width: 124px; }
.font { width: 344px; }
.font .body { padding-left: 10px; }
.align { width: 388px; }
.align .body { padding-left: 10px; }
.number { width: 194px; }
.number .body { padding: 10px 10px 0; }
.styles { width: 228px; }
.styles .body { padding: 0 3px; }
.cells { width: 176px; }
.cells .body { padding: 0 10px; }
.edit { width: 273px; }
.edit .body { padding-left: 14px; }
.addin { width: 72px; }
.data { width: 74px; }

.rows { display: flex; flex-direction: column; gap: 11px; padding-top: 10px; }
.row { display: flex; align-items: center; height: 29px; }
.row.spaced .tool + .tool { margin-left: 2px; }
.tool { width: 28px; height: 29px; flex: none; }
.drop { width: 18px; height: 29px; }
.sep { width: 1px; height: 27px; margin: 0 5px; background: #ccc; }
.sep.tall { height: 75px; margin: 10px 5px 0 3px; }
.on { background: #d0cfce; border: 1px solid #8a8a8a; }
.letter { width: 29px; height: 26px; font-size: 17px; line-height: 22px; align-items: flex-start; }
.grow { font-size: 21px; margin-left: 3px; align-items: flex-start; line-height: 26px; }
.shrink { font-size: 17px; margin-left: 3px; align-items: flex-start; line-height: 29px; }
.grow svg, .shrink svg { margin-top: 6px; }
.fontcolor { font-size: 19px; width: 20px; height: 24px; margin: 0 4px 0 6px; line-height: 17px; border-bottom: 5px solid #f00; }
.ruby { font-size: 11px; line-height: 12px; }
.percent { font-size: 23px; margin: 0 2px; }

.combo { position: relative; display: block; height: 29px; border: 1px solid #c0c0c0; background: #fff; color: #222; font-size: 15px; }
.combo select { width: 100%; height: 100%; padding-left: 3px; appearance: none; }
.combo svg { position: absolute; right: 3px; top: 11px; pointer-events: none; }
.combo.name { width: 213px; margin-right: 2px; }
.combo.size { width: 49px; }

.big { flex: 1; min-width: 0; flex-direction: column; justify-content: flex-start; height: 84px; line-height: 19px; }
.pic { display: flex; align-items: center; justify-content: center; height: 44px; }
.pic.up { padding-bottom: 6px; }
.big > svg { margin-top: 7px; }
.big span svg { vertical-align: middle; }
.clip .big { flex: none; width: 66px; padding-left: 9px; }
.stack { display: flex; flex-direction: column; gap: 6px; }
.mini { width: 28px; height: 25px; }
.mini.wide { width: 48px; gap: 9px; padding-left: 4px; justify-content: flex-start; }
.list { display: flex; flex-direction: column; gap: 2px; width: 128px; }
.list button { height: 27px; gap: 4px; justify-content: flex-start; }
.list .far { margin-left: 9px; }
.textbtn { width: 202px; height: 29px; padding-left: 5px; gap: 4px; justify-content: flex-start; }
.textbtn.on { padding-left: 3px; }
.end { margin: 0 7px 0 auto; }
.big.sort { flex: none; width: 66px; }
.big.find { flex: none; width: 58px; }
.collapse { position: absolute; right: 11px; bottom: 4px; }

/* Formula bar */
.formulabar { display: flex; height: 61px; padding: 13px 7px 12px 6px; flex: none; }
.namebox, .fx, .formula { display: flex; align-items: center; border: 1px solid #c6c6c6; background: #fdfdfd; }
.namebox { width: 127px; padding: 0 7px; font-size: 18px; }
.namebox input { flex: 1; }
.dots { width: 3px; height: 16px; margin: 10px 17px; background: repeating-linear-gradient(#aaa 0 3px, transparent 3px 6px); }
.fx { width: 137px; margin-right: 3px; }
.fx button { flex: 1; }
.fn { font-family: "Liberation Serif", serif; font-style: italic; font-weight: 400; font-size: 21px; }
.formula { flex: 1; padding: 0 4px 2px 16px; font-size: 17px; }
.formula input { flex: 1; }

/* Sheet */
.workspace { display: flex; flex: 1; min-height: 0; }
.sheet { position: relative; flex: 1; overflow: hidden; border-bottom: 1px solid #999; }
table { table-layout: fixed; width: 1930px; border-collapse: separate; border-spacing: 0; color: #000; font-size: 21px; }
col { width: 104px; }
.c-num { width: 40px; }
.c-e { width: 122px; }
tr { height: 43px; }
thead tr { height: 25px; }
tr.short { height: 41px; }
th, td { padding: 0; }
th { font-size: 19px; font-weight: 300; background: #e6e6e6; }
thead th { line-height: 22px; border-right: 1px solid #b5b5b5; border-bottom: 1px solid #999; }
tbody th { vertical-align: bottom; line-height: 24px; padding-right: 4px; border-right: 1px solid #8a8a8a; border-bottom: 1px solid #aaa; }
th.sel { background: #d2d2d2; color: #1c6b3e; }
.corner { background: linear-gradient(135deg, transparent 50%, #b1b1b1 50%) 20px 5px / 16px 17px no-repeat #e6e6e6; }
td { padding-bottom: 2px; background: #fff; border-right: 1px solid #d4d4d4; border-bottom: 1px solid #d4d4d4; }
tbody tr:first-child td { border-top: 1px solid #0000d0; }
tbody th + td[colspan] { border-left: 1px solid #0000d0; }
td.zip { padding-left: 3px; }
td.addr { padding-left: 3px; vertical-align: top; line-height: 25px; }
td.who { text-align: center; }
td.small { font-size: 15px; padding-left: 2px; }
td.edge { border-right: 3px solid #0000d0; }
tbody tr td.outside { background: #a0a0a0; border: none; }
td.current { position: relative; outline: 2px solid #217346; outline-offset: -1px; }
.handle { position: absolute; right: -3px; bottom: -3px; width: 6px; height: 6px; background: #217346; border: 1px solid #fff; border-width: 1px 0 0 1px; }
.pagebreak { position: absolute; left: 888px; top: 26px; bottom: 0; width: 2px; background: repeating-linear-gradient(#0000d0 0 9px, #fff 9px 12px); }

.vscroll { display: flex; flex-direction: column; width: 25px; padding: 2px 3px 0; background: #f0f0f0 content-box; }
.vscroll button, .vscroll .thumb, .hscroll button, .hscroll .thumb { background: #fff; border: 1px solid #999; }
.vscroll button { height: 19px; }
.vscroll .thumb { height: 302px; margin-bottom: auto; }
.vscroll svg, .hscroll svg { fill: #222; stroke: none; }

/* Sheet tabs */
.sheetbar { position: relative; display: flex; height: 28px; flex: none; border-bottom: 1px solid #c0c0c0; font-size: 16px; font-weight: 400; }
.arrows { display: flex; gap: 22px; align-items: center; width: 100px; padding-left: 28px; }
.arrows svg { fill: #b5b5b5; stroke: none; }
.tab { width: 79px; height: 25px; border-right: 1px solid #999; line-height: 21px; align-items: flex-start; }
.tab.active { width: 80px; background: #fff; color: #217346; border-bottom: 3px solid #217346; border-right: none; }
.plus { margin-left: 31px; color: #777; }
.hscroll { display: flex; align-items: center; flex: 0 1 745px; margin: 4px 26px 4px auto; }
.hscroll .dots { margin: 0 15px 0 0; }
.hscroll button { width: 19px; height: 19px; }
.hscroll .thumb { flex: 1; height: 19px; }
.hscroll .track { width: 42px; height: 19px; background: #f0f0f0; }
.ime { position: absolute; right: 617px; bottom: 13px; display: flex; align-items: center; width: 225px; height: 40px; background: #d6d6d6; color: #111; z-index: 2; }
.grip { width: 6px; height: 20px; margin: 0 7px; border: solid #999; border-width: 0 2px; }
.ime button { width: 40px; }
.ime .mode { font-size: 29px; line-height: 38px; font-weight: 300; }
.ime .kana { font-size: 14px; line-height: 17px; }

/* Status bar */
.statusbar { display: flex; align-items: center; height: 27px; padding: 0 11px 0 14px; background: #f3f2f1; font-weight: 400; flex: none; line-height: 20px; }
.access { display: flex; align-items: center; gap: 2px; margin-left: 26px; font-size: 14px; }
.views { display: flex; align-self: stretch; margin-left: auto; }
.views button { width: 50px; }
.views .on { border: none; }
.zoom { display: flex; align-items: center; gap: 5px; padding-left: 6px; }
.zoom button { width: 12px; font-size: 18px; }
.zoom input { width: 126px; height: 20px; margin: 0; appearance: none; background: linear-gradient(#555, #555) center / 100% 1px no-repeat; }
.zoom input::-webkit-slider-thumb { appearance: none; width: 6px; height: 14px; background: #333; }
.zoom span { width: 51px; text-align: right; font-size: 16px; }

/* Windows taskbar */
.taskbar { display: flex; height: 50px; background: #35171a; color: #fff; flex: none; font-weight: 400; }
.start { width: 60px; }
.tasksearch { display: flex; align-items: center; gap: 15px; width: 360px; padding: 0 5px 0 15px; background: #f2f2f2; border: 1px solid #bbb; border-left: none; color: #222; font-size: 17px; }
.tasksearch input { flex: 1; }
.tasksearch input::placeholder { color: #333; opacity: 1; }
.case { display: flex; align-items: center; justify-content: center; width: 90px; height: 40px; border-radius: 8px; background: #e2e2e2; }
.apps { display: flex; }
.apps button { width: 62px; border-bottom: 3px solid transparent; }
.apps button:first-child { width: 60px; margin-right: 3px; }
.apps .open { background: linear-gradient(#76b9ed, #76b9ed) bottom / 51px 3px no-repeat border-box; }
.apps .current-app { background: linear-gradient(#76b9ed, #76b9ed) bottom / 100% 3px no-repeat border-box #624547; }
.tray { display: flex; align-items: center; margin-left: auto; height: 50px; margin-right: 4px; padding-right: 15px; border-right: 1px solid #8a7a7c; }
.weather { gap: 11px; font-size: 17px; }
.trayicons { display: flex; align-items: center; gap: 11px; margin-left: 31px; }
.trayicons .mode { font-size: 22px; }
.clock { width: 104px; text-align: center; line-height: 23px; }
.notice { width: 32px; margin-left: 8px; }
```
